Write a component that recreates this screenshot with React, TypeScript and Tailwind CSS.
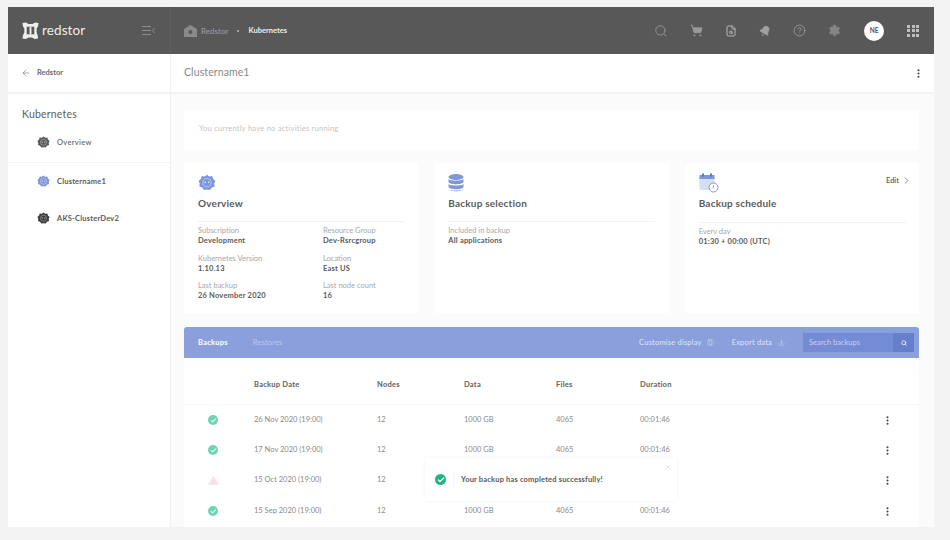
import React from "react";
import { Search, ShoppingCart, FileSearch, HelpCircle, Settings, ArrowLeft, ChevronRight, Download, Columns3, X, Check, MoreVertical, Bell } from "lucide-react";

const K8s = ({ color, size = 14 }: { color: string; size?: number }) => (
  <svg width={size} height={size} viewBox="0 0 24 24" className="shrink-0">
    <path d="M12 1l3 2.2 4-.4 1.2 3.8 3 2.6-1.600 3.600.6 4-3.800 1.200-2.400 3.200L12 20.600l-4 .6-2.400-3.200-3.800-1.200.6-4L.8 9.200l3-2.600L5 2.800l4 .4z" fill={color} />
    <circle cx="12" cy="11.500" r="5.600" fill={color} stroke="#ffffff" strokeOpacity="0.5" strokeWidth="1.200" />
    <circle cx="9.600" cy="11" r="1" fill="#fff" />
    <circle cx="14.400" cy="11" r="1" fill="#fff" />
  </svg>
);

const Kv = ({ k, v }: { k: string; v: string }) => (
  <div className="flex flex-col">
    <span className="text-[7.5px] leading-[10px] text-[#a8a8a8]">{k}</span>
    <span className="text-[7.5px] leading-[10px] font-bold text-[#5a5a5a] tracking-[0.2px]">{v}</span>
  </div>
);

const Status = ({ s }: { s: string }) =>
  s === "ok" ? (
    <div className="w-[10px] h-[10px] rounded-full bg-[#6ed3b4] flex items-center justify-center">
      <Check size={7} color="#fff" strokeWidth={3.5} />
    </div>
  ) : (
    <svg width="11" height="10" viewBox="0 0 11 10"><path d="M5.500 0.500L10.800 9.800H0.200z" fill="#f9e2e6" /></svg>
  );

const rows = [
  { s: "ok", d: "26 Nov 2020 (19:00)", h: "h-[30px]", full: true },
  { s: "ok", d: "17 Nov 2020 (19:00)", h: "h-[30px]", full: true },
  { s: "warn", d: "15 Oct 2020 (19:00)", h: "h-[30px]", full: false },
  { s: "ok", d: "15 Sep 2020 (19:00)", h: "h-[32px]", full: true },
];

export default function App() {
  return (
    <div className="w-[950px] h-[540px] overflow-hidden bg-[#f3f3f3] pl-2 pt-[7px] font-['Lato','Liberation_Sans',sans-serif]">
      <div className="relative w-[926px] h-[520px] bg-white flex flex-col overflow-hidden opacity-[0.999]">
        {/* Header */}
        <header className="h-[47px] shrink-0 bg-[#585858] flex items-center text-white">
          <div className="w-[163px] h-full shrink-0 flex items-center pl-[14px] border-r border-[#606060]">
            <svg width="17" height="17" viewBox="0 0 18 18">
              <path d="M0.500 1L4 0.500 7 2h4l3-1.500 3.500.5-.5 3.500L15.500 7v4l1 3 .5 3.500-3.500.5-3-1.500H7L4 18 .5 17.500 1 14l1.500-3V7L1 4.500z" fill="#eeeeee" />
              <rect x="5" y="5" width="8" height="8" fill="#585858" />
              <rect x="8" y="5" width="2" height="8" fill="#eeeeee" />
            </svg>
            <span className="ml-[3px] text-[13.500px] leading-none text-[#eeeeee] tracking-[0.100px]">redstor</span>
            <svg className="ml-[57px]" width="13" height="11" viewBox="0 0 13 11" fill="none" stroke="#8d8d8d" strokeWidth="1">
              <path d="M0 1.500h9M0 5.500h9M0 9.500h9M12.500 3L10.500 5.500l2 2.500" />
            </svg>
          </div>
          <div className="flex items-center pl-[13px] flex-1">
            <svg width="13" height="12" viewBox="0 0 13 12"><path d="M6.500 0L13 4v8H0V4z" fill="#8a8a8a" /><circle cx="6.500" cy="7" r="2" fill="#585858" /></svg>
            <span className="ml-[4px] text-[8px] text-[#969696] font-semibold">Redstor</span>
            <span className="mx-[9px] w-[2px] h-[2px] rounded-full bg-[#bbbbbb]" />
            <span className="text-[7.500px] text-[#eeeeee] font-bold">Kubernetes</span>
          </div>
          <div className="flex items-center pr-[15px] text-[#9a9a9a]">
            <Search size={14} strokeWidth={1.500} className="mr-[22px]" />
            <ShoppingCart size={13} fill="#9a9a9a" strokeWidth={1.500} className="mr-[22px]" />
            <FileSearch size={12} strokeWidth={2} className="mr-[22px] text-[#b5b5b5]" />
            <Bell size={12} fill="#a0a0a0" strokeWidth={1.500} className="mr-[22px] rotate-[30deg] text-[#a0a0a0]" />
            <HelpCircle size={13} strokeWidth={1.400} className="mr-[22px] text-[#a5a5a5]" />
            <Settings size={13} fill="#858585" strokeWidth={1.500} className="mr-[23px] text-[#858585]" />
            <div className="w-[20px] h-[20px] rounded-full bg-white text-[#555555] text-[6.500px] font-bold flex items-center justify-center mr-[23px]">NE</div>
            <div className="grid grid-cols-3 gap-[1.500px]">
              {Array.from({ length: 9 }).map((_, i) => (
                <span key={i} className="w-[3px] h-[3px] bg-[#bdbdbd]" />
              ))}
            </div>
          </div>
        </header>

        <div className="flex flex-1 min-h-0">
          {/* Sidebar */}
          <aside className="w-[163px] shrink-0 border-r border-[#f1f1f1] flex flex-col">
            <div className="h-[40px] border-b-2 border-[#f3f3f3] flex items-center pl-[13px]">
              <ArrowLeft size={10} strokeWidth={1.500} className="text-[#777777]" />
              <span className="ml-[6px] text-[7.500px] font-bold text-[#6a6a6a]">Redstor</span>
            </div>
            <div className="pl-[14px] pt-[14px] text-[10.500px] leading-[13px] text-[#5e5e5e] tracking-[0.200px]">Kubernetes</div>
            <div className="flex items-center pl-[29px] mt-[15px] pb-[13px] border-b border-[#f3f3f3]">
              <K8s color="#5a5a5a" size={13} />
              <span className="ml-[7px] text-[7.500px] leading-[13px] font-semibold text-[#6a6a6a] tracking-[0.300px]">Overview</span>
            </div>
            <div className="flex items-center pl-[29px] mt-[12px]">
              <K8s color="#7e97dc" size={13} />
              <span className="ml-[7px] text-[7.500px] leading-[13px] font-bold text-[#5a5a5a] tracking-[0.200px]">Clustername1</span>
            </div>
            <div className="flex items-center pl-[29px] mt-[24px]">
              <K8s color="#3d3d3d" size={13} />
              <span className="ml-[7px] text-[7.500px] leading-[13px] font-bold text-[#5a5a5a] tracking-[0.200px]">AKS-ClusterDev2</span>
            </div>
          </aside>

          {/* Main */}
          <main className="flex-1 min-w-0 flex flex-col bg-[#fbfbfb]">
            <div className="h-[40px] shrink-0 bg-white border-b-2 border-[#f3f3f3] flex items-center justify-between pl-[13px] pr-[10px]">
              <span className="text-[10.500px] text-[#888888] tracking-[0.100px]">Clustername1</span>
              <MoreVertical size={11} strokeWidth={2.500} className="text-[#444444]" />
            </div>
            <div className="pl-[13px] pr-[15px] pt-[16px] flex flex-col flex-1 min-h-0">
              <div className="h-[40px] bg-white flex items-start pl-[15px] pt-[14px]">
                <span className="text-[7.500px] leading-[10px] text-[#c4c4c4] tracking-[0.250px]">You currently have no activities running</span>
              </div>
              <div className="grid grid-cols-3 gap-x-[16px] mt-[13px] h-[150px]">
                <section className="bg-white pl-[14px] pr-[14px] pt-[11px]">
                  <K8s color="#7e97dc" size={18} />
                  <h2 className="mt-[5px] text-[10px] leading-[13px] font-bold text-[#5a5a5a] tracking-[0.200px]">Overview</h2>
                  <div className="mt-[11px] border-t border-[#f1f1f1] pt-[4px] grid grid-cols-[125px_1fr] gap-y-[8px]">
                    <Kv k="Subscription" v="Development" />
                    <Kv k="Resource Group" v="Dev-Rsrcgroup" />
                    <Kv k="Kubernetes Version" v="1.10.13" />
                    <Kv k="Location" v="East US" />
                    <div className="-mt-px"><Kv k="Last backup" v="26 November 2020" /></div>
                    <div className="-mt-px"><Kv k="Last node count" v="16" /></div>
                  </div>
                </section>
                <section className="bg-white pl-[14px] pr-[14px] pt-[11px]">
                  <svg width="16" height="18" viewBox="0 0 16 18">
                    <ellipse cx="8" cy="3" rx="7.500" ry="3" fill="#7e97dc" />
                    <path d="M.5 5c1 2 14 2 15 0v3c-1 3-14 3-15 0z" fill="#7e97dc" />
                    <path d="M.5 10c1 2 14 2 15 0v3c-1 3-14 3-15 0z" fill="#7e97dc" />
                    <path d="M.5 15c1 2 14 2 15 0c-1 3-14 3-15 0z" fill="#7e97dc" />
                  </svg>
                  <h2 className="mt-[5px] text-[10px] leading-[13px] font-bold text-[#5a5a5a] tracking-[0.200px]">Backup selection</h2>
                  <div className="mt-[11px] border-t border-[#f1f1f1] pt-[4px]">
                    <Kv k="Included in backup" v="All applications" />
                  </div>
                </section>
                <section className="bg-white pl-[14px] pr-[7px] pt-[10px]">
                  <div className="flex items-start justify-between">
                    <svg width="20" height="20" viewBox="0 0 20 20">
                      <rect x="0.500" y="2" width="15" height="15" rx="1.500" fill="#d7def3" />
                      <rect x="0.500" y="2" width="15" height="4" fill="#7e97dc" />
                      <rect x="3" y="0.500" width="2" height="3" fill="#5d78c8" />
                      <rect x="11" y="0.500" width="2" height="3" fill="#5d78c8" />
                      <circle cx="14.500" cy="14.500" r="4.500" fill="#fff" stroke="#7e97dc" strokeWidth="1" />
                      <path d="M14.500 12v3h-1" stroke="#7e97dc" fill="none" strokeWidth="0.800" />
                    </svg>
                    <div className="flex items-center mt-[2px] text-[7.500px] font-semibold text-[#5a5a5a]">
                      Edit
                      <ChevronRight size={11} strokeWidth={1.500} className="ml-[2px]" />
                    </div>
                  </div>
                  <h2 className="mt-[4px] text-[10px] leading-[13px] font-bold text-[#5a5a5a] tracking-[0.200px]">Backup schedule</h2>
                  <div className="mt-[12px] mr-[6px] border-t border-[#f1f1f1] pt-[4px]">
                    <Kv k="Every day" v="01:30 + 00:00 (UTC)" />
                  </div>
                </section>
              </div>

              {/* Table */}
              <div className="mt-[14px] flex-1 min-h-0 bg-white flex flex-col">
                <div className="h-[31px] shrink-0 bg-[#8a9fdc] rounded-t-[3px] flex items-center pl-[14px] pr-[5px]">
                  <span className="text-[7.500px] font-bold text-white tracking-[0.250px]">Backups</span>
                  <span className="ml-[25px] text-[7.500px] text-[#bcc9ef] tracking-[0.150px]">Restores</span>
                  <div className="ml-auto flex items-center text-[7.500px] text-[#dfe5f7] tracking-[0.200px]">
                    <span>Customise display</span>
                    <Columns3 size={7} className="ml-[5px] text-[#c6d0ef]" />
                    <span className="ml-[18px]">Export data</span>
                    <Download size={7} className="ml-[6px] text-[#c6d0ef]" />
                    <div className="ml-[18px] w-[111px] h-[19px] bg-[#738cd4] flex items-center justify-between pl-[6px]">
                      <span className="text-[#c6d0ef] tracking-normal">Search backups</span>
                      <div className="w-[21px] h-full bg-[#6480cd] flex items-center justify-center">
                        <Search size={6} strokeWidth={3} className="text-white" />
                      </div>
                    </div>
                  </div>
                </div>
                <div className="grid grid-cols-[70px_123px_87px_92px_84px_1fr_37px] h-[47px] pt-[7px] shrink-0 items-center text-[7.500px] font-bold text-[#5e5e5e] tracking-[0.250px] border-b border-[#f8f8f8]">
                  <span />
                  <span>Backup Date</span>
                  <span>Nodes</span>
                  <span>Data</span>
                  <span>Files</span>
                  <span>Duration</span>
                  <span />
                </div>
                {rows.map((r) => (
                  <div key={r.d} className={`grid grid-cols-[70px_123px_87px_92px_84px_1fr_37px] ${r.h} shrink-0 items-center text-[7.500px] text-[#8a8a8a]`}>
                    <div className="flex pl-[24px]">
                      <Status s={r.s} />
                    </div>
                    <span>{r.d}</span>
                    <span>12</span>
                    <span>{r.full ? "1000 GB" : ""}</span>
                    <span>{r.full ? "4065" : ""}</span>
                    <span>{r.full ? "00:01:46" : ""}</span>
                    <MoreVertical size={11} strokeWidth={2.500} className="text-[#444444]" />
                  </div>
                ))}
              </div>
            </div>
          </main>
        </div>

        {/* Toast */}
        <div className="absolute left-[417px] top-[451px] w-[252px] h-[43px] bg-white shadow-[0_0_4px_rgba(0,0,0,0.06)] flex items-center pl-[10px]">
          <div className="w-[11px] h-[11px] rounded-full bg-[#1fb583] flex items-center justify-center">
            <Check size={8} color="#fff" strokeWidth={3.500} />
          </div>
          <div className="ml-[7px] w-px h-[14px] bg-[#f3f3f3]" />
          <span className="ml-[7px] text-[7.500px] font-bold text-[#5a5a5a] tracking-[0.170px]">Your backup has completed successfully!</span>
          <X size={6} className="absolute right-[6px] top-[6px] text-[#c4c4c4]" />
        </div>
      </div>
    </div>
  );
}
